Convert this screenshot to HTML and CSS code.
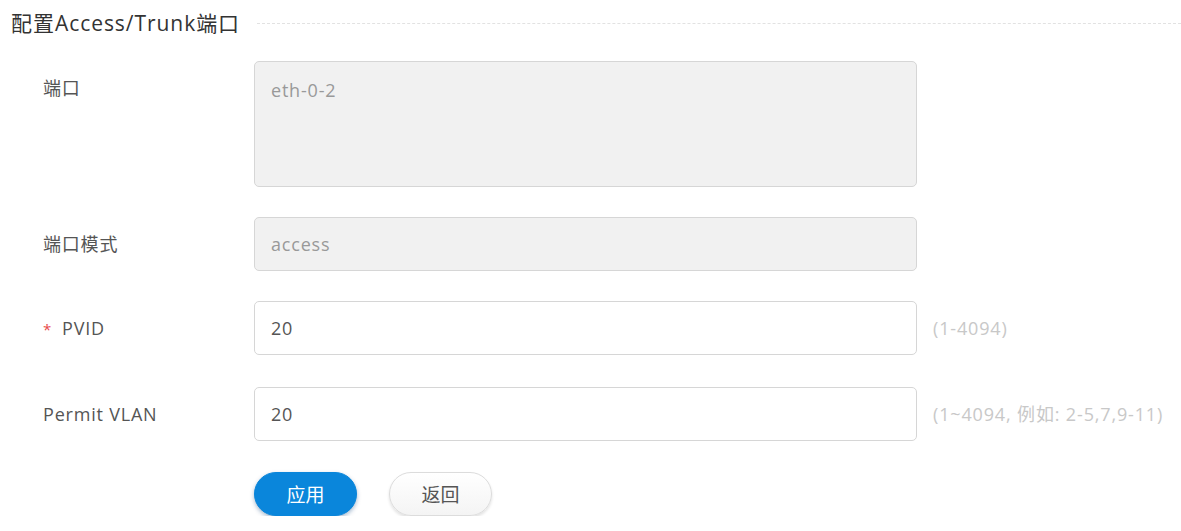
FILE: index.html
```html
<!DOCTYPE html>
<html lang="zh">
<head>
<meta charset="utf-8">
<link rel="stylesheet" href="styles.css">
</head>
<body>
<div class="page">
  <div class="legend">
    <span class="legend-title">配置Access/Trunk端口</span>
    <span class="legend-line"></span>
  </div>
  <form class="form">
    <div class="row">
      <label class="label">端口</label>
      <div class="field area disabled">eth-0-2</div>
      <div class="help"></div>
    </div>
    <div class="row">
      <label class="label">端口模式</label>
      <div class="field disabled">access</div>
      <div class="help"></div>
    </div>
    <div class="row">
      <label class="label"><span class="req">*</span>PVID</label>
      <div class="field">20</div>
      <div class="help">(1-4094)</div>
    </div>
    <div class="row row-wide">
      <label class="label">Permit VLAN</label>
      <div class="field">20</div>
      <div class="help">(1~4094, 例如: 2-5,7,9-11)</div>
    </div>
    <div class="actions">
      <button type="button" class="btn primary">应用</button>
      <button type="button" class="btn">返回</button>
    </div>
  </form>
</div>
</body>
</html>
```
FILE: styles.css
```css
html, body {
  margin: 0;
  padding: 0;
  background: #fff;
}
body {
  font-family: "Open Sans", "Noto Sans CJK SC", sans-serif;
  color: #555;
}
.page {
  padding: 9px 0 0 11px;
}
.legend {
  display: flex;
  align-items: center;
  gap: 17px;
  height: 28px;
}
.legend-title {
  font-size: 21px;
  letter-spacing: 0.95px;
  color: #333;
  white-space: nowrap;
  line-height: 28px;
}
.legend-line {
  flex: 1;
  border-top: 1px dashed #e2e2e2;
  margin-top: 1px;
}
.form {
  margin-top: 24px;
  display: flex;
  flex-direction: column;
  gap: 30px;
}
.row {
  display: grid;
  grid-template-columns: 243px 663px auto;
  align-items: start;
  height: 54px;
}
.row:first-child {
  height: 126px;
}
.row-wide {
  margin-top: 2px;
}
.label {
  display: block;
  height: 54px;
  padding-left: 32px;
  font-size: 18px;
  letter-spacing: 0.8px;
  line-height: 54px;
  color: #555;
  white-space: nowrap;
}
.req {
  color: #e84a4a;
  font-size: 15px;
  line-height: 1;
  margin-right: 10px;
}
.field {
  box-sizing: border-box;
  height: 54px;
  border: 1px solid #d6d6d6;
  border-radius: 5px;
  padding: 0 16px;
  font-size: 18px;
  letter-spacing: 0.8px;
  line-height: 52px;
  color: #555;
  background: #fff;
}
.field.area {
  height: 126px;
  line-height: 1;
  padding-top: 19px;
}
.field.disabled {
  background: #f1f1f1;
  color: #999;
}
.help {
  padding-left: 16px;
  font-size: 18px;
  letter-spacing: 0.85px;
  line-height: 54px;
  color: #c8c8c8;
  white-space: nowrap;
}
.actions {
  display: flex;
  gap: 32px;
  padding-left: 243px;
  margin-top: 1px;
}
.btn {
  box-sizing: border-box;
  width: 103px;
  height: 44px;
  border-radius: 22px;
  border: 1px solid #dcdcdc;
  background: linear-gradient(#fff, #f4f4f4);
  font-family: "Open Sans", "Noto Sans CJK SC", sans-serif;
  font-size: 19px;
  color: #555;
  box-shadow: 0 2px 3px rgba(0,0,0,0.12);
  cursor: pointer;
}
.btn.primary {
  background: #0a86db;
  border-color: #0a86db;
  color: #fff;
  box-shadow: 0 2px 4px rgba(0,60,120,0.35);
}
```
